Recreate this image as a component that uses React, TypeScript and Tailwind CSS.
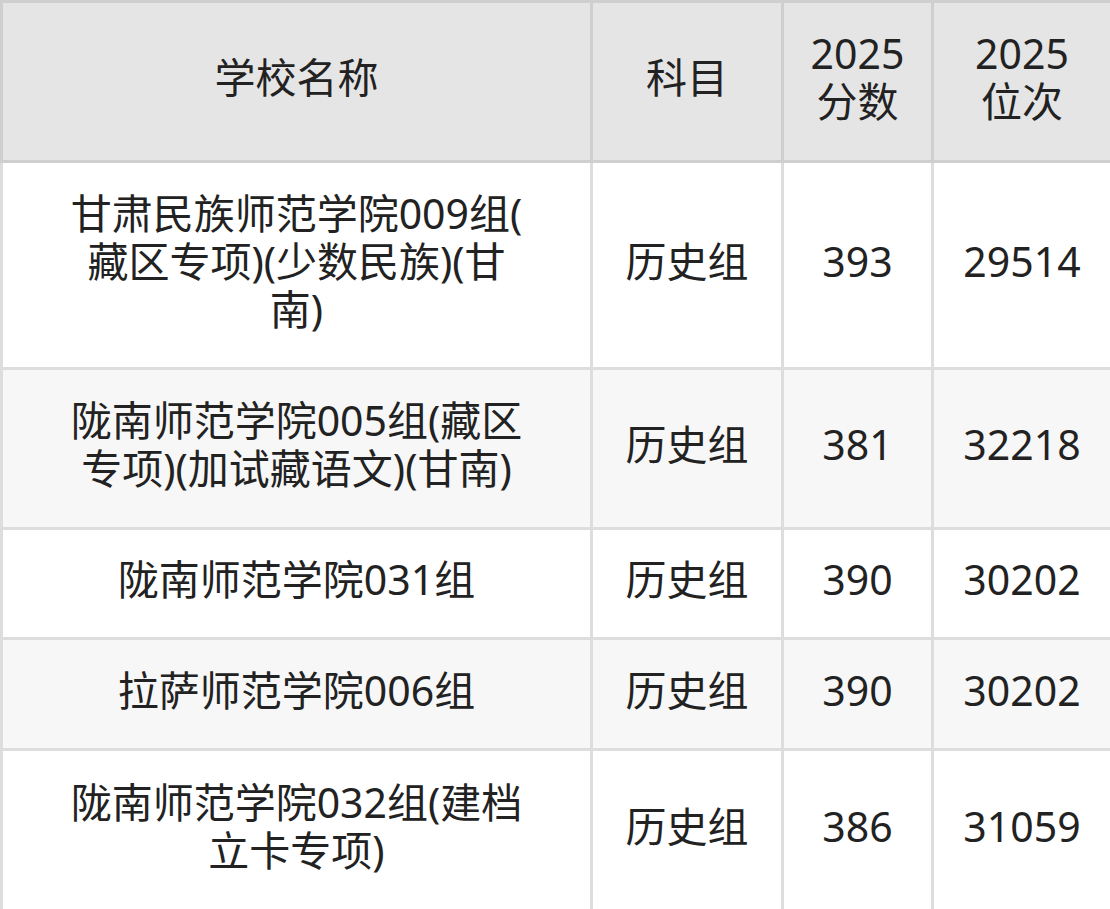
const rows = [
  { name: ["甘肃民族师范学院009组(", "藏区专项)(少数民族)(甘", "南)"], subject: "历史组", score: "393", rank: "29514", h: "h-[207px]" },
  { name: ["陇南师范学院005组(藏区", "专项)(加试藏语文)(甘南)"], subject: "历史组", score: "381", rank: "32218", h: "h-[160px]" },
  { name: ["陇南师范学院031组"], subject: "历史组", score: "390", rank: "30202", h: "h-[110px]" },
  { name: ["拉萨师范学院006组"], subject: "历史组", score: "390", rank: "30202", h: "h-[111px]" },
  { name: ["陇南师范学院032组(建档", "立卡专项)"], subject: "历史组", score: "386", rank: "31059", h: "h-[161px]" },
]

export default function App() {
  return (
    <div
      className="w-[1110px] bg-white text-[#222] text-[41px] leading-[48px]"
      style={{ fontFamily: '"Noto Sans", "Noto Sans CJK SC", sans-serif' }}
    >
      <table className="w-[1110px] table-fixed border-collapse text-center">
        <colgroup>
          <col className="w-[590px]" />
          <col className="w-[191px]" />
          <col className="w-[150px]" />
          <col className="w-[179px]" />
        </colgroup>
        <thead>
          <tr className="h-[160px] bg-[#e5e5e5]">
            <th className="border-[3px] border-[#cfcfcf] pb-[9px] font-normal">学校名称</th>
            <th className="border-[3px] border-[#cfcfcf] pb-[9px] font-normal">科目</th>
            <th className="border-[3px] border-[#cfcfcf] pb-[9px] font-normal">
              2025
              <br />
              分数
            </th>
            <th className="border-[3px] border-[#cfcfcf] pb-[9px] font-normal">
              2025
              <br />
              位次
            </th>
          </tr>
        </thead>
        <tbody>
          {rows.map((r, i) => (
            <tr key={i} className={`${r.h} ${i % 2 === 1 ? "bg-[#f7f7f7]" : "bg-white"}`}>
              <td className="border-[3px] border-[#dddddd] px-[20px] pb-[9px]">
                {r.name.map((line, j) => (
                  <div key={j} className="whitespace-nowrap">
                    {line}
                  </div>
                ))}
              </td>
              <td className="border-[3px] border-[#dddddd] pb-[9px]">{r.subject}</td>
              <td className="border-[3px] border-[#dddddd] pb-[9px]">{r.score}</td>
              <td className="border-[3px] border-[#dddddd] pb-[9px]">{r.rank}</td>
            </tr>
          ))}
        </tbody>
      </table>
    </div>
  )
}
